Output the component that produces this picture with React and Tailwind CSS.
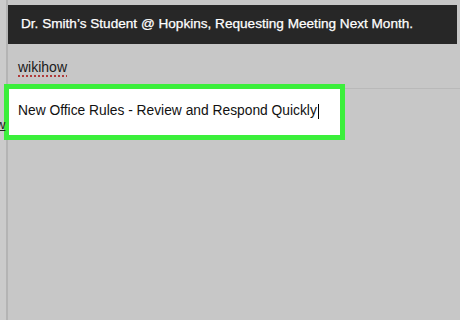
export default function App() {
  return (
    <div className="relative flex w-[460px] h-[320px] overflow-hidden bg-[#c7c7c7]" style={{ fontFamily: '"Liberation Sans", Arial, sans-serif' }}>
      <div className="w-[6px] bg-[#cbcbcb]" />
      <div className="w-[2px] bg-[#b4b4b4]" />
      <div className="flex flex-1 flex-col pt-[5px]">
        <div className="mr-[3px] flex h-[39px] items-center bg-[#272727] pl-[13px] pb-[1px] text-[13.6px] text-white [-webkit-text-stroke:0.25px_white]">
          Dr. Smith’s Student @ Hopkins, Requesting Meeting Next Month.
        </div>
        <div className="flex h-[45px] items-center border-b border-[#b9b9b9] pl-[10px] pt-[1px]">
          <span className="text-[14px] leading-none text-[#1a1a1a] underline decoration-dotted decoration-[#b03a3a] decoration-[1.5px] underline-offset-[4px]">wikihow</span>
        </div>
        <div className="-ml-[4px] -mt-[5px] flex h-[56px] w-[341px] items-center border-[5px] border-[#3bef3b] bg-white pl-[9px] pb-[1px]">
          <span className="text-[13.8px] text-[#111]">New Office Rules - Review and Respond Quickly</span>
          <span className="ml-[1px] h-[15px] w-[1px] bg-black" />
        </div>
      </div>
      <span className="absolute left-[-4px] top-[115px] text-[13px] text-[#222] underline">w</span>
    </div>
  );
}
